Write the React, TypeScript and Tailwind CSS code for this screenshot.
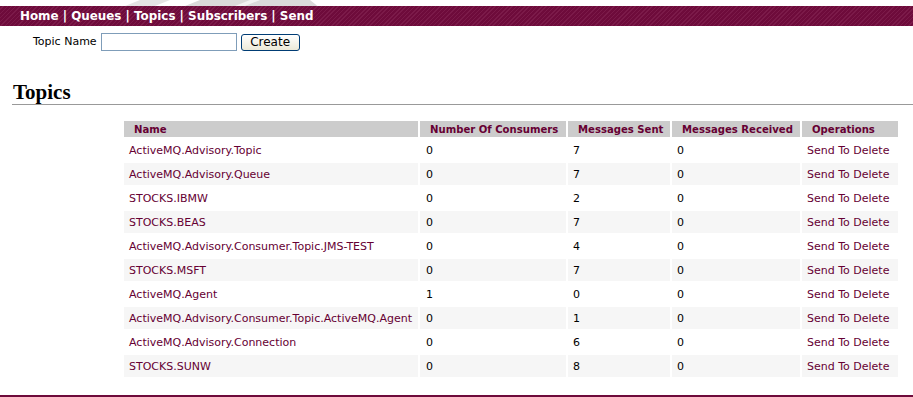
import React from "react";

const rows: [string, string, string, string][] = [
  ["ActiveMQ.Advisory.Topic", "0", "7", "0"],
  ["ActiveMQ.Advisory.Queue", "0", "7", "0"],
  ["STOCKS.IBMW", "0", "2", "0"],
  ["STOCKS.BEAS", "0", "7", "0"],
  ["ActiveMQ.Advisory.Consumer.Topic.JMS-TEST", "0", "4", "0"],
  ["STOCKS.MSFT", "0", "7", "0"],
  ["ActiveMQ.Agent", "1", "0", "0"],
  ["ActiveMQ.Advisory.Consumer.Topic.ActiveMQ.Agent", "0", "1", "0"],
  ["ActiveMQ.Advisory.Connection", "0", "6", "0"],
  ["STOCKS.SUNW", "0", "8", "0"],
];

export default function App() {
  return (
    <div className="relative w-[913px] h-[397px] bg-white overflow-hidden font-['DejaVu_Sans',Verdana,sans-serif] text-[11px] text-black">
      <svg className="absolute left-[110px] top-0" width="220" height="8" viewBox="0 0 220 8">
        <path d="M10 8 L30 0 L60 0 L40 8 Z" fill="#e4e4e4" />
        <path d="M70 8 L90 0 L200 0 L210 8 Z" fill="#dadada" />
        <path d="M120 8 L140 0 L150 0 L130 8 Z" fill="#f2f2f2" />
      </svg>
      <div className="h-[6px]" />
      <div className="relative h-[20px] flex items-center pl-[20px] pt-[2px] bg-[repeating-linear-gradient(135deg,#6e0b3b_0px,#6e0b3b_2px,#7b1a49_2px,#7b1a49_3px)] text-white font-bold text-[11.9px] leading-none">
        <span>Home | Queues | Topics | Subscribers | Send</span>
      </div>
      <div className="flex items-center pl-[33px] pt-[7px] h-[25px]">
        <span className="text-[11px]">Topic Name</span>
        <input className="ml-[4px] w-[136px] h-[18px] border border-[#7f9db9] bg-white outline-none" />
        <button className="ml-[4px] w-[59px] h-[17px] border border-[#003c74] rounded-[3px] bg-[linear-gradient(#ffffff,#ece9d8)] text-[12px] leading-none font-['DejaVu_Sans',sans-serif] text-black">
          Create
        </button>
      </div>
      <h2 className="mt-[30px] ml-[13px] mr-0 font-['Liberation_Serif',serif] font-bold text-[21px] leading-[23px] text-black">
        Topics
      </h2>
      <div className="ml-[12px] h-[1px] bg-[#999]" />
      <div className="mt-[14px] pl-[122px]">
        <table className="table-fixed w-[778px] border-separate border-spacing-[2px] text-[11px]">
          <colgroup>
            <col className="w-[294px]" />
            <col className="w-[146px]" />
            <col className="w-[102px]" />
            <col className="w-[128px]" />
            <col className="w-[96px]" />
          </colgroup>
          <thead>
            <tr className="text-[#660033] font-bold text-left text-[10.1px] whitespace-nowrap">
              <th className="h-[16px] bg-[#cccccc] p-0 pt-[2px] pl-[10px] leading-none overflow-hidden">Name</th>
              <th className="bg-[#cccccc] p-0 pt-[2px] pl-[10px] leading-none overflow-hidden">Number Of Consumers</th>
              <th className="bg-[#cccccc] p-0 pt-[2px] pl-[10px] leading-none overflow-hidden">Messages Sent</th>
              <th className="bg-[#cccccc] p-0 pt-[2px] pl-[10px] leading-none overflow-hidden">Messages Received</th>
              <th className="bg-[#cccccc] p-0 pt-[2px] pl-[10px] leading-none overflow-hidden">Operations</th>
            </tr>
          </thead>
          <tbody>
            {rows.map((r, i) => {
              const bg = i % 2 === 1 ? "bg-[#f6f6f6]" : "bg-white";
              return (
                <tr key={i}>
                  <td className={`${bg} h-[22px] p-0 pt-[2px] pl-[5px] text-[#660033] whitespace-nowrap overflow-hidden`}>{r[0]}</td>
                  <td className={`${bg} p-0 pt-[2px] pl-[6px]`}>{r[1]}</td>
                  <td className={`${bg} p-0 pt-[2px] pl-[5px]`}>{r[2]}</td>
                  <td className={`${bg} p-0 pt-[2px] pl-[5px]`}>{r[3]}</td>
                  <td className={`${bg} p-0 pt-[2px] pl-[5px] text-[#660033] whitespace-nowrap overflow-hidden`}>Send To Delete</td>
                </tr>
              );
            })}
          </tbody>
        </table>
      </div>
      <div className="absolute left-0 right-0 top-[395px] h-[2px] bg-[#6e0b3b]" />
    </div>
  );
}
